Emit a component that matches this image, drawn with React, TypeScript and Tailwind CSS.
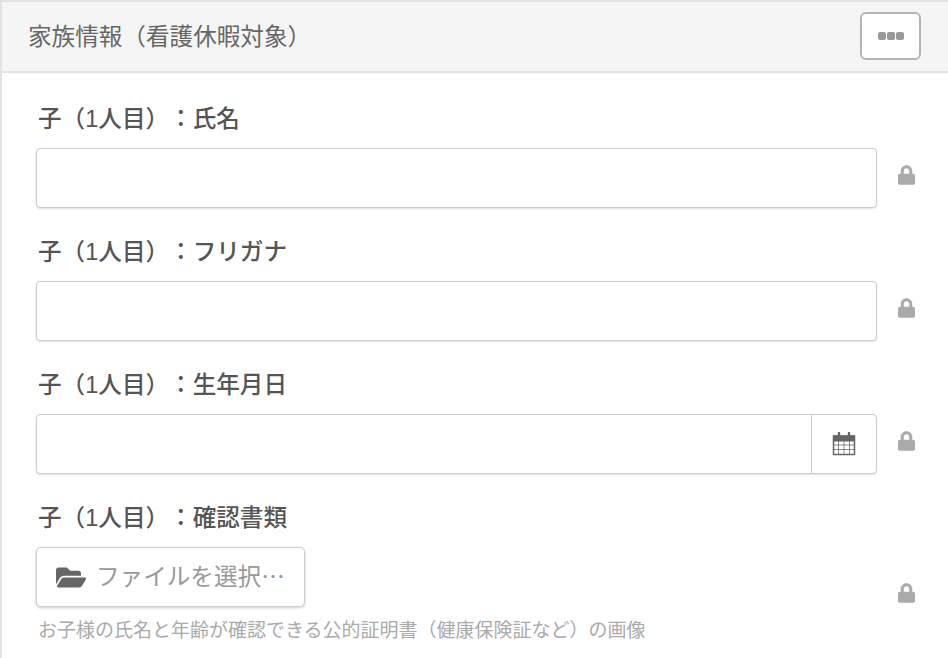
import React from "react";
import { FaFolderOpen, FaLock } from "react-icons/fa";

const FONT = "font-['Liberation_Sans','Noto_Sans_CJK_JP',sans-serif] [text-spacing-trim:space-all]";

function Lock() {
  return (
    <div className="w-[58px] shrink-0 flex justify-center text-[#aaaaaa]">
      <FaLock className="w-[17px] h-[20px] mb-[7px]" />
    </div>
  );
}

// カレンダーのアイコン
function CalendarIcon() {
  return (
    <svg viewBox="0 0 24 24" className="w-[24px] h-[24px] text-[#666666]" fill="none" stroke="currentColor">
      <rect x="1.5" y="4" width="21" height="18.5" fill="#ffffff" strokeWidth="1.5" />
      <rect x="1.5" y="4" width="21" height="5" fill="currentColor" strokeWidth="1" />
      <path d="M1.5 13h21M1.5 17.5h21M6.5 9v13.5M12 9v13.5M17.5 9v13.5" strokeWidth="1" opacity="0.75" />
      <path d="M7 1v5M17 1v5" strokeWidth="2.4" strokeLinecap="round" />
    </svg>
  );
}

function Field({ label, calendar }: { label: string; calendar?: boolean }) {
  return (
    <div className="mb-[28px]">
      <div className="h-[30px] pt-[1px] leading-[30px] text-[23.6px] font-medium text-[#555555] pl-[2px] mb-[15px]">{label}</div>
      <div className="flex items-center">
        <div className="flex-1 flex h-[60px] bg-white border border-[#cccccc] rounded-[4px] shadow-[0_1px_2px_rgba(0,0,0,0.12)]">
          <div className="flex-1" />
          {calendar && (
            <div className="w-[65px] border-l border-[#cccccc] flex items-center justify-center">
              <CalendarIcon />
            </div>
          )}
        </div>
        <Lock />
      </div>
    </div>
  );
}

export default function App() {
  return (
    <div className={`w-[948px] h-[658px] overflow-hidden bg-white ${FONT}`}>
      <div className="h-full border-l-2 border-t-2 border-[#e3e3e3]">
        <div className="h-[71px] bg-[#f5f5f5] border-b-2 border-[#e3e3e3] flex items-center justify-between pl-[26px] pr-[27px]">
          <h2 className="text-[23.6px] font-normal text-[#666666] mt-[2px]">家族情報（看護休暇対象）</h2>
          <button className="w-[61px] h-[48px] bg-white border-2 border-[#b5b5b5] rounded-[6px] flex items-center justify-center gap-[1px] mb-[2px]">
            <span className="w-[8px] h-[8px] rounded-[2px] bg-[#999999]" />
            <span className="w-[8px] h-[8px] rounded-[2px] bg-[#999999]" />
            <span className="w-[8px] h-[8px] rounded-[2px] bg-[#999999]" />
          </button>
        </div>
        <div className="pt-[30px] pl-[34px] pr-[13px]">
          <Field label="子（1人目）：氏名" />
          <Field label="子（1人目）：フリガナ" />
          <Field label="子（1人目）：生年月日" calendar />
          <div className="h-[30px] pt-[1px] leading-[30px] text-[23.6px] font-medium text-[#555555] pl-[2px] mb-[15px]">子（1人目）：確認書類</div>
          <div className="flex">
            <div className="flex-1">
              <button className="w-[269px] h-[60px] bg-white border border-[#cccccc] rounded-[5px] shadow-[0_1px_3px_rgba(0,0,0,0.2)] flex items-center pl-[19px] gap-[10px] text-[23.6px] text-[#999999] font-['Noto_Sans_CJK_JP',sans-serif]">
                <FaFolderOpen className="w-[30px] h-[27px] text-[#666666]" />
                <span className="mb-[2px]">ファイルを選択…</span>
              </button>
              <p className="mt-[11px] ml-[2px] text-[19px] leading-[26px] text-[#aaaaaa] whitespace-nowrap">お子様の氏名と年齢が確認できる公的証明書（健康保険証など）の画像</p>
            </div>
            <div className="pt-[36px]">
              <Lock />
            </div>
          </div>
        </div>
      </div>
    </div>
  );
}
